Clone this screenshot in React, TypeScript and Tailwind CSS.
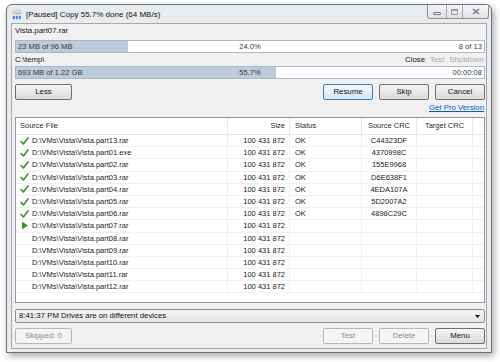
const files = [
  { name: 'D:\\VMs\\Vista\\Vista.part13.rar', crc: 'C44323DF', done: true },
  { name: 'D:\\VMs\\Vista\\Vista.part01.exe', crc: '4370998C', done: true },
  { name: 'D:\\VMs\\Vista\\Vista.part02.rar', crc: '155E9968', done: true },
  { name: 'D:\\VMs\\Vista\\Vista.part03.rar', crc: 'D6E638F1', done: true },
  { name: 'D:\\VMs\\Vista\\Vista.part04.rar', crc: '4EDA107A', done: true },
  { name: 'D:\\VMs\\Vista\\Vista.part05.rar', crc: '5D2007A2', done: true },
  { name: 'D:\\VMs\\Vista\\Vista.part06.rar', crc: '4898C29C', done: true },
  { name: 'D:\\VMs\\Vista\\Vista.part07.rar', crc: '', active: true },
  { name: 'D:\\VMs\\Vista\\Vista.part08.rar', crc: '' },
  { name: 'D:\\VMs\\Vista\\Vista.part09.rar', crc: '' },
  { name: 'D:\\VMs\\Vista\\Vista.part10.rar', crc: '' },
  { name: 'D:\\VMs\\Vista\\Vista.part11.rar', crc: '' },
  { name: 'D:\\VMs\\Vista\\Vista.part12.rar', crc: '' },
];

function Check() {
  return (
    <svg width="9" height="8" viewBox="0 0 9 8">
      <path d="M1 4.5 L3.4 7 L8 1" fill="none" stroke="#3b9a2c" strokeWidth="1.7" strokeLinecap="round" strokeLinejoin="round" />
    </svg>
  );
}

function Play() {
  return (
    <svg width="9" height="9" viewBox="0 0 9 9">
      <polygon points="2,0.5 8,4.5 2,8.5" fill="#2f9a22" />
    </svg>
  );
}

function Btn({ label, focus, disabled, wide }: { label: string; focus?: boolean; disabled?: boolean; wide?: boolean }) {
  const base = 'h-[16px] rounded-[2px] flex items-center justify-center text-[7.8px] border';
  const look = disabled
    ? 'border-[#b5b9bd] bg-[#f4f4f4] text-[#8d8d8d]'
    : focus
    ? 'border-[#3c7fb1] bg-gradient-to-b from-[#f4f8fb] to-[#d6e4ef] text-[#111]'
    : 'border-[#707070] bg-gradient-to-b from-[#f6f6f6] to-[#dadada] text-[#111]';
  return <div className={`${base} ${look} ${wide ? 'w-[57px]' : 'w-[50px]'}`}>{label}</div>;
}

function Bar({ fill, left, mid, right }: { fill: string; left: string; mid: string; right: string }) {
  return (
    <div className="relative h-[13px] border border-[#a9b8cb] bg-white">
      <div className={`absolute left-0 top-0 bottom-0 bg-[#bccadb] ${fill}`} />
      <div className="relative grid grid-cols-3 items-center h-full px-[2px] text-[7.6px] text-[#3a3a3a]">
        <span>{left}</span>
        <span className="justify-self-center">{mid}</span>
        <span className="justify-self-end">{right}</span>
      </div>
    </div>
  );
}

export default function App() {
  return (
    <div className="w-[500px] h-[362px] bg-white pl-[6px] pt-[4px] font-['Liberation_Sans',Arial,sans-serif]">
      <div className="w-[486px] flex flex-col border border-[#6e7378] rounded-t-[6px] bg-[#e9ecef] shadow-[2px_3px_7px_rgba(0,0,0,0.35)]">
        {/* TITLE BAR */}
        <div className="h-[18px] flex pl-[5px]">
          <div className="flex items-center gap-[4px] flex-1 pt-[1px]">
            <svg width="10" height="12" viewBox="0 0 10 12">
              <ellipse cx="5" cy="3" rx="4.5" ry="2.2" fill="#9aa0a6" />
              <ellipse cx="5" cy="2.4" rx="4.5" ry="1.8" fill="#d4d8dc" />
              <path d="M1 7 L2.5 8.5 L1 10 M4 7 L5.5 8.5 L4 10 M7 7 L8.5 8.5 L7 10" fill="none" stroke="#2a62c8" strokeWidth="1.2" />
            </svg>
            <span className="text-[8px] text-[#111]">[Paused] Copy 55.7% done (64 MB/s)</span>
          </div>
          <div className="self-start mr-[2px] flex h-[14px] border border-t-0 border-[#8c9196] rounded-b-[3px] bg-gradient-to-b from-[#f3f4f6] to-[#dfe2e6]">
            <div className="w-[19px] flex items-center justify-center border-r border-[#a6abb0]">
              <div className="w-[8px] h-[3px] mt-[3px] border border-[#7b7f84] rounded-[1px]" />
            </div>
            <div className="w-[16px] flex items-center justify-center border-r border-[#a6abb0]">
              <div className="w-[7px] h-[6px] border border-t-2 border-[#9a9ea3]" />
            </div>
            <div className="w-[25px] flex items-center justify-center">
              <svg width="8" height="7" viewBox="0 0 8 7">
                <path d="M1 1 L7 6 M7 1 L1 6" stroke="#7b7f84" strokeWidth="1.6" />
              </svg>
            </div>
          </div>
        </div>

        {/* CLIENT */}
        <div className="mx-[4px] mb-[3px] border border-[#a3a8ad] bg-[#f0f0f0] pl-[3px] pr-[1px] pb-[4px] flex flex-col text-[#111]">
          <div className="h-[16px] pb-[2px] flex items-center text-[7.8px]">Vista.part07.rar</div>
          <Bar fill="w-[24%]" left="23 MB of 96 MB" mid="24.0%" right="8 of 13" />
          <div className="h-[13px] flex items-center text-[7.8px]">
            <span className="flex-1">C:\temp\</span>
            <div className="flex gap-[5px] pr-[1px]">
              <span className="text-[#111]">Close</span>
              <span className="text-[#a8a8a8]">Test</span>
              <span className="text-[#a8a8a8]">Shutdown</span>
            </div>
          </div>
          <Bar fill="w-[55.5%]" left="693 MB of 1.22 GB" mid="55.7%" right="00:00:08" />

          <div className="mt-[5px] flex gap-[6px]">
            <Btn label="Less" wide />
            <div className="flex-1" />
            <Btn label="Resume" focus />
            <Btn label="Skip" />
            <Btn label="Cancel" />
          </div>
          <div className="h-[16px] flex items-center justify-end pr-[1px]">
            <span className="text-[7.8px] text-[#0a55c8] underline">Get Pro Version</span>
          </div>

          {/* LIST */}
          <div className="mt-[1px] h-[186px] border border-[#8e959c] bg-white text-[7.5px] overflow-hidden">
            <div className="h-[17px] grid grid-cols-[212px_62px_72px_55px_56px_1fr] border-b border-[#e3e6ea] text-[#2b2b2b]">
              <div className="flex items-center pl-[4px] border-r border-[#e3e6ea]">Source File</div>
              <div className="flex items-center justify-end pr-[4px] border-r border-[#e3e6ea]">Size</div>
              <div className="flex items-center pl-[5px] border-r border-[#e3e6ea]">Status</div>
              <div className="flex items-center justify-center border-r border-[#e3e6ea]">Source CRC</div>
              <div className="flex items-center justify-center border-r border-[#e3e6ea]">Target CRC</div>
              <div />
            </div>
            {files.map((f) => (
              <div key={f.name} className="h-[12.2px] grid grid-cols-[212px_62px_72px_55px_56px_1fr] border-b border-[#f0f0f0] text-[#222]">
                <div className="flex items-center pl-[4px] gap-[3px] border-r border-[#f0f0f0]">
                  <span className="w-[9px] flex items-center justify-center">
                    {f.done ? <Check /> : f.active ? <Play /> : null}
                  </span>
                  <span>{f.name}</span>
                </div>
                <div className="flex items-center justify-end pr-[4px] border-r border-[#f0f0f0]">100 431 872</div>
                <div className="flex items-center pl-[5px] border-r border-[#f0f0f0]">{f.done ? 'OK' : ''}</div>
                <div className="flex items-center justify-center border-r border-[#f0f0f0]">{f.crc}</div>
                <div className="border-r border-[#f0f0f0]" />
                <div />
              </div>
            ))}
          </div>

          {/* STATUS COMBO */}
          <div className="mt-[6px] h-[14px] border border-[#8a8f94] rounded-[2px] bg-gradient-to-b from-[#f5f5f5] to-[#e3e3e3] flex items-center pl-[3px] pr-[4px] text-[7.8px]">
            <span className="flex-1">8:41:37 PM Drives are on different devices</span>
            <svg width="5" height="3" viewBox="0 0 5 3">
              <polygon points="0,0 5,0 2.5,3" fill="#111" />
            </svg>
          </div>

          <div className="mt-[5px] flex gap-[6px]">
            <Btn label="Skipped: 0" wide disabled />
            <div className="flex-1" />
            <Btn label="Test" disabled />
            <Btn label="Delete" disabled />
            <Btn label="Menu" />
          </div>
        </div>
      </div>
    </div>
  );
}
